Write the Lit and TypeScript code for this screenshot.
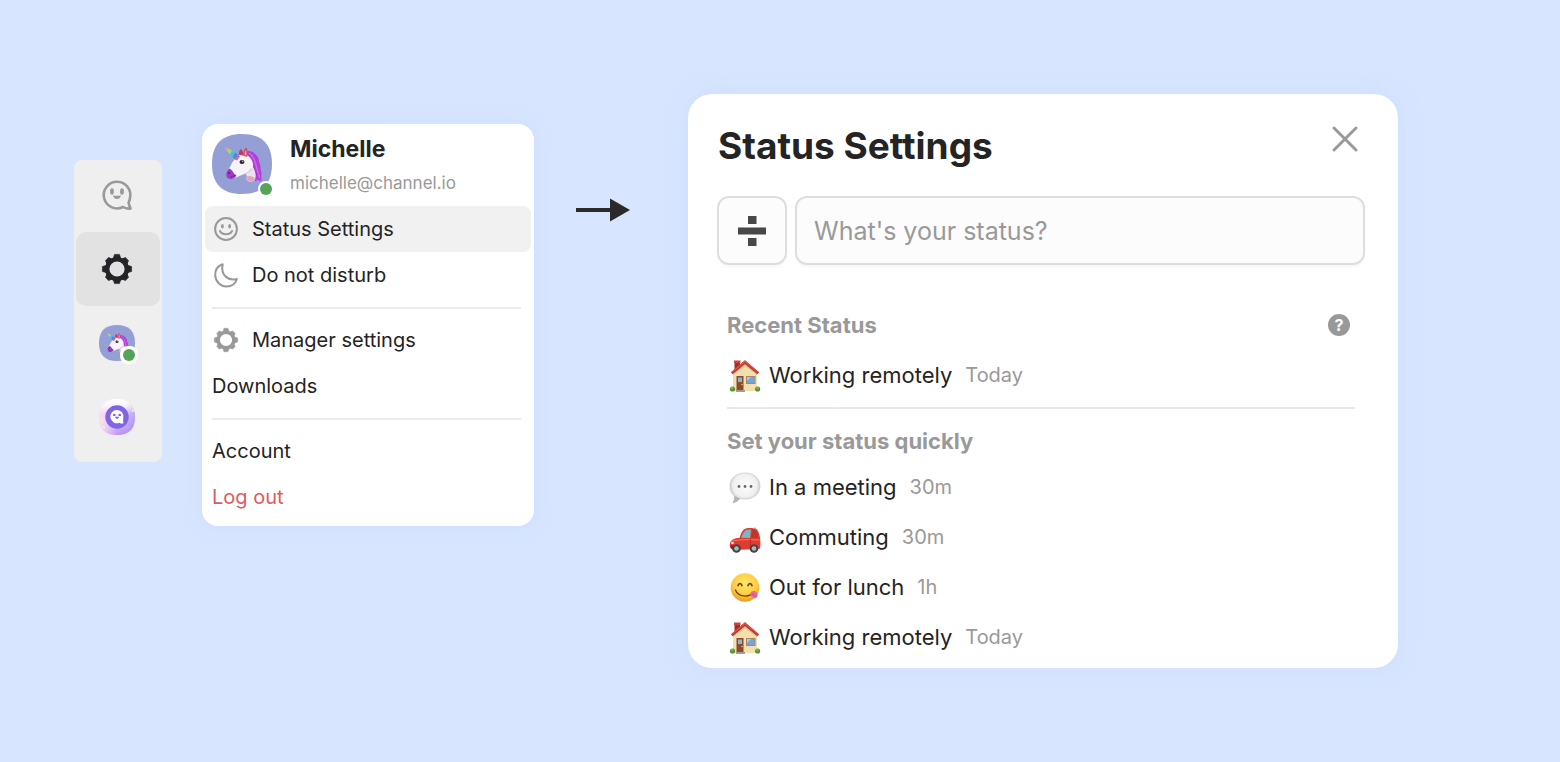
import { LitElement, html, css, svg } from "lit";
import { customElement } from "lit/decorators.js";

const SQUIRCLE = "M30 0C50 0 60 10 60 30S50 60 30 60 0 50 0 30 10 0 30 0Z";

const unicorn = svg`
  <path d=${SQUIRCLE} fill="#949fd6"/>
  <path d="M33 18C36 16 41 17 43 20C46 22 47 25 47 28C49 31 48 34 49 37C50 40 49 43 49.500 47C47 47 46 46 45 45C45 47 44 47 43 47L36 34Z" fill="#b13fd8"/>
  <path d="M37 19C42 22 43 27 44 31S46 40 48 44" fill="none" stroke="#d06aea" stroke-width="1.400"/>
  <path d="M36 24C40 28 40 34 45 41" fill="none" stroke="#8f2ab8" stroke-width="1.200"/>
  <path d="M31 33L40 31C42 35 45 39 43 46C39 49 35 48 34 44C36 42 34 39 31 38Z" fill="#ece2ef"/>
  <path d="M34 43C37 41 41 42 43.500 45C40 49 35 48 34 43Z" fill="#dda6bb"/>
  <path d="M24 24C27 19 35 19 39 25C43 31 41 36 36 38.500C31 40 28 42 24 43.500C19 46 14.500 44 14.500 40C14 37 18 34 19 31C20 28 22 26 24 24Z" fill="#f6f4f9"/>
  <path d="M24 43.500C30 40 35 40 39 34C41 35 40 37 36 39C31 40.500 28 42 24 43.500Z" fill="#d8cfe2"/>
  <path d="M17.500 34.500C13.500 37 13.500 42 15.500 44C19 46.500 23 44.500 24.500 41.500C22 41 21 36 17.500 34.500Z" fill="#9b3fc0"/>
  <circle cx="17" cy="39" r="1" fill="#5d187b"/>
  <path d="M18 43.200C20 42.500 22 42.200 24 41" fill="none" stroke="#6e2490" stroke-width=".8"/>
  <path d="M12.500 13L19 16L17 19Z" fill="#efa873"/>
  <path d="M16 14.600L21.500 17.400L18.500 21L15.200 17Z" fill="#a8d873"/>
  <path d="M20 16.700L24.500 19.300L21 24L17.700 20Z" fill="#4cc3d2"/>
  <path d="M23 18.500L27 21.500L23.500 26L20.500 23Z" fill="#5585dc"/>
  <path d="M26 20.500L28 22.500L25 26.500L23 25.500Z" fill="#d862b0"/>
  <path d="M27 21C26.500 18 27.500 16 29 15C31 17 31.500 19 31 21.500Z" fill="#bd3c6a"/>
  <path d="M31 21.500C31 18 32.500 15 34.300 13.300C36 17 36 20 34.500 23Z" fill="#cf4565"/>
  <path d="M32.500 20.500C32.500 18.500 33.500 16.500 34 16C35 18.500 34.500 20.500 34 22Z" fill="#f0a4b5"/>
  <ellipse cx="30" cy="28" rx="2.500" ry="2.100" fill="#2d2530"/>
  <circle cx="30.700" cy="27.300" r=".6" fill="#fff"/>`;

const gearShape = svg`
  <circle r="9.800" fill="none" stroke="currentColor" stroke-width="4.400"/>
  ${[0, 90, 180, 270].map((a) => svg`<path d="M-3.600-11L-2.500-14.600H2.500L3.600-11Z" fill="currentColor" stroke="currentColor" stroke-width=".6" stroke-linejoin="round" transform="rotate(${a})"/>`)}
  ${[45, 135, 225, 315].map((a) => svg`<path d="M-3.200-11L-2.200-13.800H2.200L3.200-11Z" fill="currentColor" stroke="currentColor" stroke-width="1" stroke-linejoin="round" transform="rotate(${a})"/>`)}`;

const gear = (size: number) => html`<svg width=${size} height=${size} viewBox="-15 -15 30 30" aria-hidden="true">${gearShape}</svg>`;

const chatGhost = html`<svg width="32" height="32" viewBox="0 0 32 32" aria-hidden="true">
  <path d="M28.900 18.500A13.300 13.300 0 1 0 22 27C24.500 28.600 27 28.900 29.600 28.400C28.600 26.800 28 25 27.600 22.500C28.300 21.200 28.700 19.900 28.900 18.500Z" fill="none" stroke="#999" stroke-width="2.600" stroke-linejoin="round"/>
  <ellipse cx="11" cy="11.500" rx="1.900" ry="3.300" fill="#999"/>
  <ellipse cx="21" cy="11.500" rx="1.900" ry="3.300" fill="#999"/>
  <path d="M12.200 15.200C14.500 16 17.500 16 19.800 15.200C20 17.500 18 19 16 19S12 17.500 12.200 15.200Z" fill="#999"/>
</svg>`;

const channelLogo = html`<svg width="36" height="36" viewBox="0 0 60 60" aria-hidden="true">
  <defs>
    <linearGradient id="sky" x1=".4" y1="0" x2=".6" y2="1">
      <stop offset="0" stop-color="#fff"/><stop offset=".35" stop-color="#e6dcfb"/><stop offset="1" stop-color="#c094fb"/>
    </linearGradient>
    <linearGradient id="blush" x1="0" y1=".5" x2=".5" y2=".5">
      <stop offset="0" stop-color="#fbdcf6"/><stop offset="1" stop-color="#fbdcf6" stop-opacity="0"/>
    </linearGradient>
    <linearGradient id="dusk" x1="1" y1=".6" x2=".6" y2=".5">
      <stop offset="0" stop-color="#a793f0"/><stop offset="1" stop-color="#a793f0" stop-opacity="0"/>
    </linearGradient>
    <linearGradient id="glow" x1=".5" y1="0" x2=".5" y2=".4">
      <stop offset="0" stop-color="#fff"/><stop offset="1" stop-color="#fff" stop-opacity="0"/>
    </linearGradient>
  </defs>
  <path d=${SQUIRCLE} fill="url(#sky)"/>
  <path d=${SQUIRCLE} fill="url(#blush)"/>
  <path d=${SQUIRCLE} fill="url(#dusk)" opacity=".7"/>
  <path d=${SQUIRCLE} fill="url(#glow)"/>
  <circle cx="30" cy="30" r="19.500" fill="#8265e3"/>
  <path d="M40.500 32A11 11 0 1 0 34 39.500C36 41 38.500 41.200 41 40.500C40 38 40 35 40.500 32Z" fill="#fff"/>
  <ellipse cx="25.500" cy="26.500" rx="2.300" ry="2" fill="#8265e3"/>
  <ellipse cx="34.500" cy="26.500" rx="2.300" ry="2" fill="#8265e3"/>
  <path d="M26.500 29.500H33.500C33 32 31.500 33 30 33S27 32 26.500 29.500Z" fill="#8265e3"/>
  <g fill="#faf3b5"><circle cx="50.500" cy="10.500" r="2.200"/><circle cx="56.500" cy="19.500" r="1.800"/><circle cx="3.500" cy="36.500" r="2"/><circle cx="8" cy="47" r="2.300"/></g>
</svg>`;

const smile = html`<svg width="24" height="24" viewBox="0 0 24 24" fill="none" stroke="#999" stroke-width="2" aria-hidden="true">
  <circle cx="12" cy="12" r="10.900"/>
  <ellipse cx="8.400" cy="9.200" rx="1.400" ry="2.200" fill="#999" stroke="none"/>
  <ellipse cx="15.600" cy="9.200" rx="1.400" ry="2.200" fill="#999" stroke="none"/>
  <path d="M6 14C8 18.300 16 18.300 18 14" stroke-linecap="round"/>
</svg>`;

const moon = html`<svg width="24" height="26" viewBox="0 0 24 26" aria-hidden="true">
  <path d="M8.700 2.200C3.500 4 1 8.500 1.200 13.300C1.500 19.600 6.500 24.500 12.500 24.500C17.500 24.500 21.500 21.600 22.900 17C15.500 19.300 6 14 8.700 2.200Z" fill="none" stroke="#999" stroke-width="2" stroke-linejoin="round"/>
</svg>`;

const house = html`<svg width="32" height="36" viewBox="0 -1 32 36" aria-hidden="true">
  <path d="M5.500 3.500H11V13H5.500Z" fill="#a52f26"/><path d="M5 2.500H11.500V5H5Z" fill="#c8473a"/>
  <path d="M4 14.500L16 5L28 14.500V33H4Z" fill="#f3deb0"/>
  <path d="M4 14.500L16 5L28 14.500V17L16 8L4 17Z" fill="#d9bd8b"/>
  <path d="M16 2.300L30 14.300L28.500 16.300L16 6L3.500 16.300L2 14.300Z" fill="#b8352c"/>
  <path d="M16 2.300L30 14.300L29.300 15L16 4.200L2.700 15L2 14.300Z" fill="#d9574a"/>
  <path d="M7.500 18H14.500V33H7.500Z" fill="#8a4b2b"/><path d="M9 19.500H13V24H9Z" fill="#8eb4cc"/>
  <circle cx="13" cy="26.500" r=".8" fill="#e4c069"/>
  <path d="M17 18H26.500V26H17Z" fill="#a7886a"/><path d="M18 19H25.500V25H18Z" fill="#6fa8d8"/><path d="M18 19H22L18 23Z" fill="#a3cdea"/>
  <path d="M7 32H16V34H7Z" fill="#a79b8f"/>
  <circle cx="3.500" cy="31" r="2.600" fill="#5b9138"/><circle cx="28.600" cy="31" r="2.600" fill="#5b9138"/>
  <circle cx="3" cy="30" r="1.200" fill="#80b54e"/><circle cx="28.400" cy="30" r="1.200" fill="#80b54e"/>
</svg>`;

const bubble = html`<svg width="32" height="36" viewBox="0 0 32 36" aria-hidden="true">
  <defs><radialGradient id="bub" cx=".5" cy=".42" r=".56"><stop offset="0" stop-color="#fdfdfd"/><stop offset=".7" stop-color="#f0f0f0"/><stop offset="1" stop-color="#bdbdbd"/></radialGradient></defs>
  <path d="M16 4C25 4 31 9.500 31 17S25 30 16 30C14 30 12.500 29.800 11 29.400C9 32 6.500 33.500 3.600 33.800C5 32 5.600 30 5.500 27C2.500 24.800 .9 21.500 .9 17C.9 9.500 7 4 16 4Z" fill="url(#bub)" stroke="#c4c4c4" stroke-width=".6"/>
  <path d="M5.500 27C5.600 30 5 32 3.600 33.800C6.500 33.500 9 32 11 29.400Z" fill="#b5b5b5"/>
  <g fill="#686868"><circle cx="10" cy="17.500" r="1.400"/><circle cx="16" cy="17.500" r="1.400"/><circle cx="22" cy="17.500" r="1.400"/></g>
</svg>`;

const car = html`<svg width="32" height="36" viewBox="0 -1 32 36" aria-hidden="true">
  <path d="M26 12V7.500" stroke="#777" stroke-width=".8"/>
  <path d="M10.500 18C12 13 14 9 17.500 8.300C21 7.600 26 8 28 9.500C30 12 31 16 31.200 19.500C31.700 23 31.500 27 30.500 29L5 30C1.500 29.500 .5 27 .8 24C1.500 19.500 6 18 10.500 18Z" fill="#e23a2e"/>
  <path d="M12.200 17.800C13.500 14 15.500 10.300 18 9.800L22 9.500L21 18Z" fill="#79b6c9"/>
  <path d="M23.300 9.600L27 10.300C28.500 12.500 29 15 29.200 17.500L22.300 18Z" fill="#b9372d"/>
  <path d="M1.500 22C6 19.500 16 19.300 30.800 20" fill="none" stroke="#f5776b" stroke-width="1"/>
  <path d="M1 25.500H6V28.500H2.500Z" fill="#78211d"/><ellipse cx="3.500" cy="23" rx="1.600" ry="1" fill="#ffe2cb"/>
  <path d="M21.500 19V27" stroke="#a9261f" stroke-width=".7"/>
  <g fill="#434347"><circle cx="7.500" cy="28.500" r="4.300"/><circle cx="25" cy="28.500" r="4.300"/></g>
  <g fill="#b3b5b9"><circle cx="7.500" cy="28.500" r="2.300"/><circle cx="25" cy="28.500" r="2.300"/></g>
</svg>`;

const yum = html`<svg width="32" height="36" viewBox="0 0 32 36" aria-hidden="true">
  <defs><radialGradient id="face" cx=".5" cy=".35" r=".65"><stop offset="0" stop-color="#ffe86b"/><stop offset=".65" stop-color="#fdcb40"/><stop offset="1" stop-color="#e89b22"/></radialGradient></defs>
  <circle cx="16" cy="18.500" r="14.300" fill="url(#face)"/>
  <path d="M9 16.500Q11 12.500 13 16.500M19 16.500Q21 12.500 23 16.500" fill="none" stroke="#6d4315" stroke-width="1.700" stroke-linecap="round"/>
  <path d="M6.500 21C9 28 20 29 24 23.500" fill="none" stroke="#6d4315" stroke-width="1.300" stroke-linecap="round"/>
  <path d="M21.500 25.500C21 22.500 25 20.500 27.500 23.500C29.500 26 28.500 29 26 29.200C23.500 29.300 22 27.500 21.500 25.500Z" fill="#ee62a2"/>
  <path d="M23.500 25L26.500 27" stroke="#c93f80" stroke-width=".8"/>
</svg>`;

const quickStatuses = [
  { icon: bubble, label: "In a meeting", time: "30m" },
  { icon: car, label: "Commuting", time: "30m" },
  { icon: yum, label: "Out for lunch", time: "1h" },
  { icon: house, label: "Working remotely", time: "Today" },
];

const base = css`
  * { box-sizing: border-box; }
  button { font: inherit; color: inherit; background: none; border: 0; margin: 0; padding: 0; text-align: left; cursor: pointer; }
  svg { display: block; flex: none; overflow: visible; }
`;

@customElement("user-avatar")
class UserAvatar extends LitElement {
  static properties = { small: { type: Boolean, reflect: true } };
  static styles = [base, css`
    :host { display: block; position: relative; width: 60px; height: 60px; flex: none; }
    :host([small]) { width: 36px; height: 36px; }
    .pic { width: 100%; height: 100%; }
    .dot { position: absolute; right: -2px; bottom: -3px; padding: 2px; border-radius: 8px; background: #fff; }
    .dot::before { content: ""; display: block; width: 12px; height: 12px; border-radius: 50%; background: #56a35a; }
    :host([small]) .dot { right: -3px; padding: 3px; }
  `];
  render() {
    return html`<svg class="pic" viewBox="0 0 60 60" role="img" aria-label="Unicorn avatar">${unicorn}</svg><span class="dot"></span>`;
  }
}

@customElement("side-rail")
class SideRail extends LitElement {
  static styles = [base, css`
    :host { display: block; flex: none; }
    .rail { display: flex; flex-direction: column; width: 88px; padding: 0 2px 8px; border-radius: 8px; background: #efefef; }
    .tab { display: flex; align-items: center; justify-content: center; height: 74px; padding-right: 2px; border-radius: 10px; color: #242428; }
    .tab:first-child { height: 72px; }
    .tab.active { background: #e2e2e2; }
  `];
  render() {
    return html`<nav class="rail" aria-label="Main">
      <button class="tab" aria-label="Team chat">${chatGhost}</button>
      <button class="tab active" aria-label="Settings">${gear(30)}</button>
      <button class="tab" aria-label="Profile"><user-avatar small></user-avatar></button>
      <button class="tab" aria-label="Channel">${channelLogo}</button>
    </nav>`;
  }
}

@customElement("profile-menu")
class ProfileMenu extends LitElement {
  static styles = [base, css`
    :host { display: block; flex: none; }
    .menu { width: 332px; padding: 0 3px 6px; border-radius: 16px; background: #fff; box-shadow: 0 0 16px #c5d9ff80; color: #242424; }
    .head { display: flex; gap: 18px; padding: 10px 7px; }
    .name { font-size: 23px; line-height: 30px; font-weight: 700; }
    .mail { margin-top: 6px; font-size: 17px; line-height: 26px; color: #999; }
    .row { display: flex; align-items: center; gap: 12px; width: 100%; height: 46px; padding: 0 7px; border-radius: 8px; font-size: 20px; line-height: 26px; }
    .row.active { background: #f1f1f1; }
    .icon { display: flex; justify-content: center; width: 28px; color: #999; }
    .danger { color: #e05a5f; }
    .rule { height: 2px; margin: 9px 10px 8px 7px; border: 0; background: #ebebeb; }
  `];
  render() {
    return html`<div class="menu">
      <header class="head">
        <user-avatar></user-avatar>
        <div><div class="name">Michelle</div><div class="mail">michelle@channel.io</div></div>
      </header>
      <button class="row active"><span class="icon">${smile}</span>Status Settings</button>
      <button class="row"><span class="icon">${moon}</span>Do not disturb</button>
      <hr class="rule">
      <button class="row"><span class="icon">${gear(24)}</span>Manager settings</button>
      <button class="row">Downloads</button>
      <hr class="rule">
      <button class="row">Account</button>
      <button class="row danger">Log out</button>
    </div>`;
  }
}

@customElement("status-dialog")
class StatusDialog extends LitElement {
  static styles = [base, css`
    :host { display: block; flex: 1; min-width: 480px; }
    .dialog { padding: 28px 33px 6px 29px; border-radius: 24px; background: #fff; box-shadow: 0 0 20px #c5d9ff80; color: #242424; }
    .top { display: flex; justify-content: space-between; padding: 0 7px 0 1px; }
    .title { margin: 0; font-size: 37px; line-height: 48px; font-weight: 700; }
    .close { align-self: flex-start; padding-top: 4px; }
    .entry { display: flex; gap: 8px; margin-top: 26px; }
    .pick, .field { height: 69px; border: 2px solid #dedede; border-radius: 12px; background: #fcfcfc; box-shadow: 0 2px 3px #0000000a; }
    .pick { display: flex; align-items: center; justify-content: center; width: 70px; flex: none; }
    .field { flex: 1; min-width: 0; padding: 0 17px; font: inherit; font-size: 25px; color: #242424; outline: none; }
    .field::placeholder { color: #999; opacity: 1; }
    .body { padding: 40px 10px 0; }
    .heading { display: flex; align-items: center; justify-content: space-between; margin: 0 0 5px; font-size: 22px; line-height: 32px; font-weight: 700; color: #999; }
    .heading.first { height: 40px; }
    .help { width: 22px; height: 22px; margin-right: 5px; border-radius: 50%; background: #999; color: #fff; font-size: 16px; line-height: 22px; font-weight: 700; text-align: center; }
    .list { margin: 0; padding: 0; list-style: none; }
    .status { display: flex; align-items: center; gap: 8px; width: 100%; height: 50px; padding: 0 2px; font-size: 22px; line-height: 28px; }
    .time { margin-left: 5px; font-size: 20px; color: #999; }
    .rule { height: 2px; margin: 7px 0 16px; border: 0; background: #e8e8e8; }
  `];
  row(s: { icon: unknown; label: string; time: string }) {
    return html`<li><button class="status">${s.icon}<span>${s.label}</span><span class="time">${s.time}</span></button></li>`;
  }
  render() {
    return html`<section class="dialog" role="dialog" aria-labelledby="title">
      <header class="top">
        <h1 class="title" id="title">Status Settings</h1>
        <button class="close" aria-label="Close"><svg width="26" height="26" viewBox="0 0 26 26"><path d="M2 2L24 24M24 2L2 24" stroke="#999" stroke-width="3" stroke-linecap="round"/></svg></button>
      </header>
      <div class="entry">
        <button class="pick" aria-label="Choose an emoji"><svg width="28" height="30" viewBox="0 0 28 30" fill="#484848"><path d="M10 0H18.500V8H10ZM0 11.500H28V18.500H0ZM10 22H18.500V30H10Z"/></svg></button>
        <input class="field" type="text" aria-label="Status" placeholder="What's your status?">
      </div>
      <div class="body">
        <h2 class="heading first">Recent Status <button class="help" aria-label="Help">?</button></h2>
        <ul class="list">${this.row(quickStatuses[3])}</ul>
        <hr class="rule">
        <h2 class="heading">Set your status quickly</h2>
        <ul class="list">${quickStatuses.map((s) => this.row(s))}</ul>
      </div>
    </section>`;
  }
}

@customElement("app-root")
class AppRoot extends LitElement {
  static styles = [base, css`
    :host { display: block; font-family: Inter, "Liberation Sans", sans-serif; }
    .page { display: flex; align-items: flex-start; min-height: 100vh; padding: 94px 162px 94px 74px; background: #d7e5ff; }
    .rail { margin: 66px 40px 0 0; }
    .menu { margin-top: 30px; }
    .arrow { margin: 104px 58px 0 42px; }
  `];
  render() {
    return html`<main class="page">
      <side-rail class="rail"></side-rail>
      <profile-menu class="menu"></profile-menu>
      <svg class="arrow" width="54" height="24" viewBox="0 0 54 24" aria-hidden="true"><path d="M0 10H34V.5L54 12L34 23.500V14H0Z" fill="#2a2a2a"/></svg>
      <status-dialog></status-dialog>
    </main>`;
  }
}
